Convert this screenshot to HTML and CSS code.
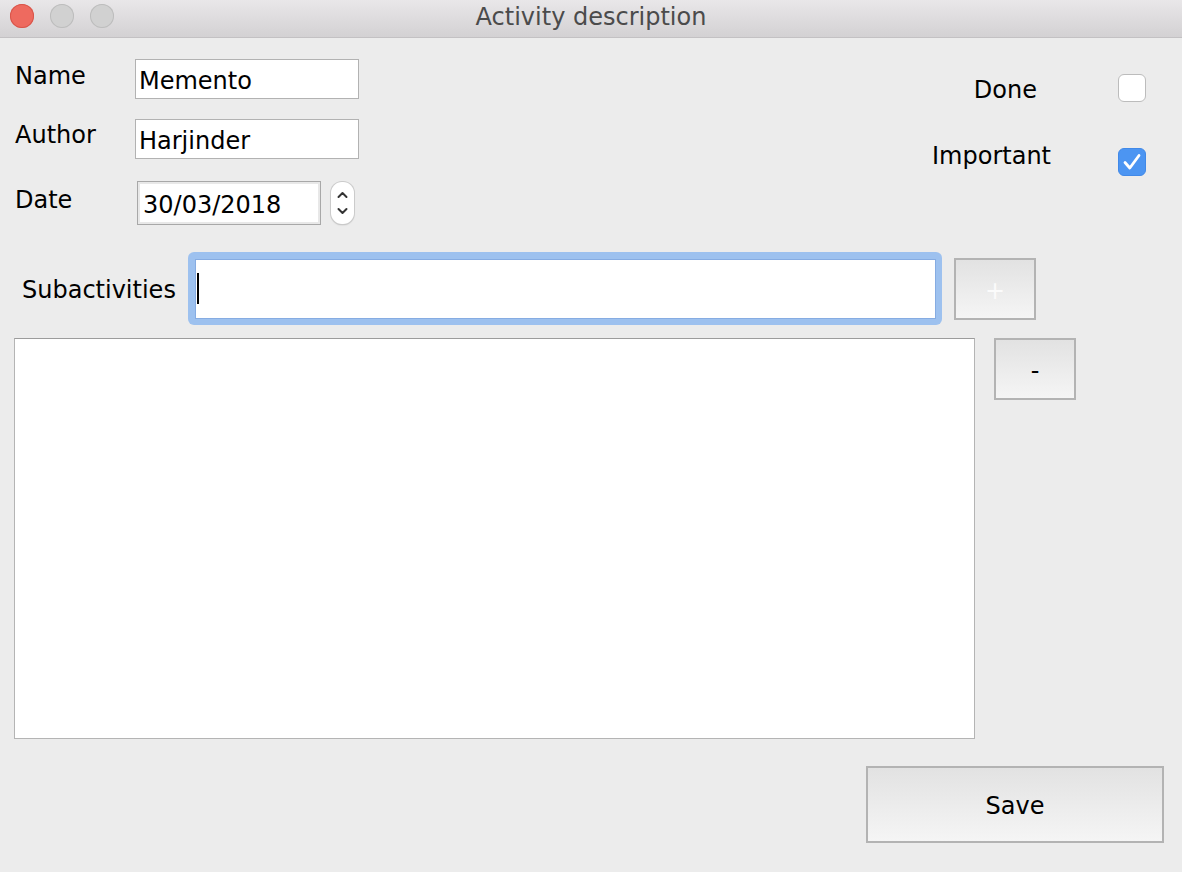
FILE: index.html
```html
<!DOCTYPE html>
<html>
<head>
<meta charset="utf-8">
<title>Activity description</title>
<link rel="stylesheet" href="styles.css">
</head>
<body>
<div class="window">
  <header class="titlebar">
    <div class="lights">
      <span class="light light-close"></span>
      <span class="light"></span>
      <span class="light"></span>
    </div>
    <div class="title">Activity description</div>
    <div class="title-spacer"></div>
  </header>
  <main class="content">
    <section class="top">
      <div class="form">
        <div class="row row-name">
          <span class="label label-name">Name</span>
          <div class="field">Memento</div>
        </div>
        <div class="row row-author">
          <span class="label label-author">Author</span>
          <div class="field">Harjinder</div>
        </div>
        <div class="row row-date">
          <span class="label label-date">Date</span>
          <div class="date-field">30/03/2018</div>
          <div class="spinner">
            <svg width="23" height="42" viewBox="0 0 23 42">
              <polyline points="7.5,15 11.5,11 15.5,15" fill="none" stroke="#333" stroke-width="2" stroke-linecap="round" stroke-linejoin="round"/>
              <polyline points="7.5,27 11.5,31 15.5,27" fill="none" stroke="#333" stroke-width="2" stroke-linecap="round" stroke-linejoin="round"/>
            </svg>
          </div>
        </div>
      </div>
      <div class="checks">
        <div class="check-row">
          <span class="check-label check-label-done">Done</span>
          <span class="checkbox"></span>
        </div>
        <div class="check-row check-row-imp">
          <span class="check-label check-label-imp">Important</span>
          <span class="checkbox checkbox-checked">
            <svg width="28" height="28" viewBox="0 0 28 28">
              <polyline points="7,14.5 11.8,20 21,7.5" fill="none" stroke="#fff" stroke-width="2.8" stroke-linecap="round" stroke-linejoin="round"/>
            </svg>
          </span>
        </div>
      </div>
    </section>
    <section class="sub-row">
      <span class="sub-label">Subactivities</span>
      <div class="focus-ring">
        <div class="sub-input"><span class="caret"></span></div>
      </div>
      <div class="btn btn-plus">+</div>
    </section>
    <section class="list-row">
      <div class="list"></div>
      <div class="btn btn-minus">-</div>
    </section>
    <footer class="actions">
      <div class="btn btn-save">Save</div>
    </footer>
  </main>
</div>
</body>
</html>
```

FILE: styles.css
```css
html, body {
  margin: 0;
  padding: 0;
  background: #ececec;
}

.window {
  width: 1182px;
  height: 872px;
  background: #ececec;
  font-family: "DejaVu Sans", "Noto Sans", sans-serif;
  font-size: 24px;
  color: #000;
  display: flex;
  flex-direction: column;
  overflow: hidden;
}

/* Title bar */
.titlebar {
  flex: none;
  height: 37px;
  border-bottom: 1px solid #c3c1c3;
  background: linear-gradient(#e9e7e9, #d3d1d3);
  display: grid;
  grid-template-columns: 1fr auto 1fr;
  align-items: start;
}

.lights {
  display: flex;
  gap: 16px;
  padding-left: 10px;
  margin-top: 4px;
}

.light {
  width: 24px;
  height: 24px;
  border-radius: 50%;
  background: #d1d1d1;
  box-shadow: inset 0 0 0 1px #bdbdbd;
}

.light-close {
  background: #ee6a5f;
  box-shadow: inset 0 0 0 1px #d8564b;
}

.title {
  font-size: 24px;
  line-height: 35px;
  color: #4b4b4b;
  white-space: nowrap;
}

.content {
  flex: 1;
  display: flex;
  flex-direction: column;
}

/* Top form */
.top {
  flex: none;
  height: 214px;
  display: flex;
}

.form {
  padding: 21px 0 0 15px;
  display: flex;
  flex-direction: column;
}

.row {
  display: flex;
  align-items: flex-start;
}

.row-name { height: 40px; }
.row-author { height: 40px; margin-top: 20px; }
.row-date { height: 44px; margin-top: 22px; }

.label {
  flex: none;
  width: 120px;
  line-height: 28px;
}

.label-name { padding-top: 3px; }
.label-author { padding-top: 2px; }
.label-date { padding-top: 5px; }

.field {
  box-sizing: border-box;
  width: 224px;
  height: 40px;
  background: #fff;
  border: 1px solid #b2b2b2;
  padding: 7px 2px 0 3px;
  line-height: 28px;
  white-space: nowrap;
  overflow: hidden;
}

.date-field {
  box-sizing: border-box;
  margin-left: 2px;
  width: 184px;
  height: 44px;
  background: #fff;
  border: 1px solid #a8a8a8;
  box-shadow: inset 0 0 0 2px #e8e8e8;
  padding: 9px 3px 0 5px;
  line-height: 28px;
  white-space: nowrap;
  overflow: hidden;
}

.spinner {
  flex: none;
  margin-left: 10px;
  margin-top: 1px;
  width: 23px;
  height: 42px;
  border-radius: 11px;
  background: #fff;
  box-shadow: 0 0 0 1px #cbcbcb, 0 1px 1.5px rgba(0, 0, 0, 0.25);
}

.spinner svg { display: block; }

/* Checkboxes */
.checks {
  margin-left: auto;
  padding: 36px 36px 0 0;
  display: flex;
  flex-direction: column;
}

.check-row {
  display: flex;
  justify-content: flex-end;
  align-items: flex-start;
}

.check-row-imp { margin-top: 44px; }

.check-label {
  line-height: 28px;
  white-space: nowrap;
}

.check-label-done { margin-top: 2px; margin-right: 81px; }
.check-label-imp { margin-top: -6px; margin-right: 67px; }

.checkbox {
  flex: none;
  box-sizing: border-box;
  width: 28px;
  height: 28px;
  border-radius: 6px;
  background: #fff;
  border: 1px solid #bcbcbc;
}

.checkbox-checked {
  background: #4c95f2;
  border-color: #4189e8;
}

.checkbox svg {
  display: block;
  margin: -1px;
}

/* Subactivities */
.sub-row {
  flex: none;
  height: 73px;
  display: flex;
  align-items: flex-start;
}

.sub-label {
  flex: none;
  width: 166px;
  padding-left: 22px;
  margin-top: 24px;
  line-height: 28px;
  white-space: nowrap;
}

.focus-ring {
  flex: none;
  padding: 7px 6px 6px 7px;
  background: #9dc1ef;
  border-radius: 6px;
}

.sub-input {
  box-sizing: border-box;
  width: 741px;
  height: 60px;
  background: #fff;
  border: 1px solid #86ace2;
  padding: 13px 0 0 1px;
}

.caret {
  display: block;
  width: 2px;
  height: 31px;
  background: #000;
}

.btn {
  flex: none;
  box-sizing: border-box;
  width: 82px;
  height: 62px;
  border: 2px solid #b3b3b3;
  background: linear-gradient(#e2e2e2, #f5f5f5);
  display: flex;
  align-items: center;
  justify-content: center;
  line-height: 28px;
  padding-top: 3px;
}

.btn-plus {
  margin-left: 12px;
  margin-top: 6px;
  color: #fbfbfb;
}

/* List */
.list-row {
  flex: none;
  display: flex;
  align-items: flex-start;
  margin-top: 13px;
  padding-left: 14px;
}

.list {
  flex: none;
  box-sizing: border-box;
  width: 961px;
  height: 401px;
  background: #fff;
  border: 1px solid #b4b4b4;
  border-top-color: #9c9c9c;
}

.btn-minus {
  margin-left: 19px;
}

/* Save */
.actions {
  flex: none;
  display: flex;
  justify-content: flex-end;
  padding-right: 18px;
  margin-top: 27px;
}

.btn-save {
  width: 298px;
  height: 77px;
}
```
